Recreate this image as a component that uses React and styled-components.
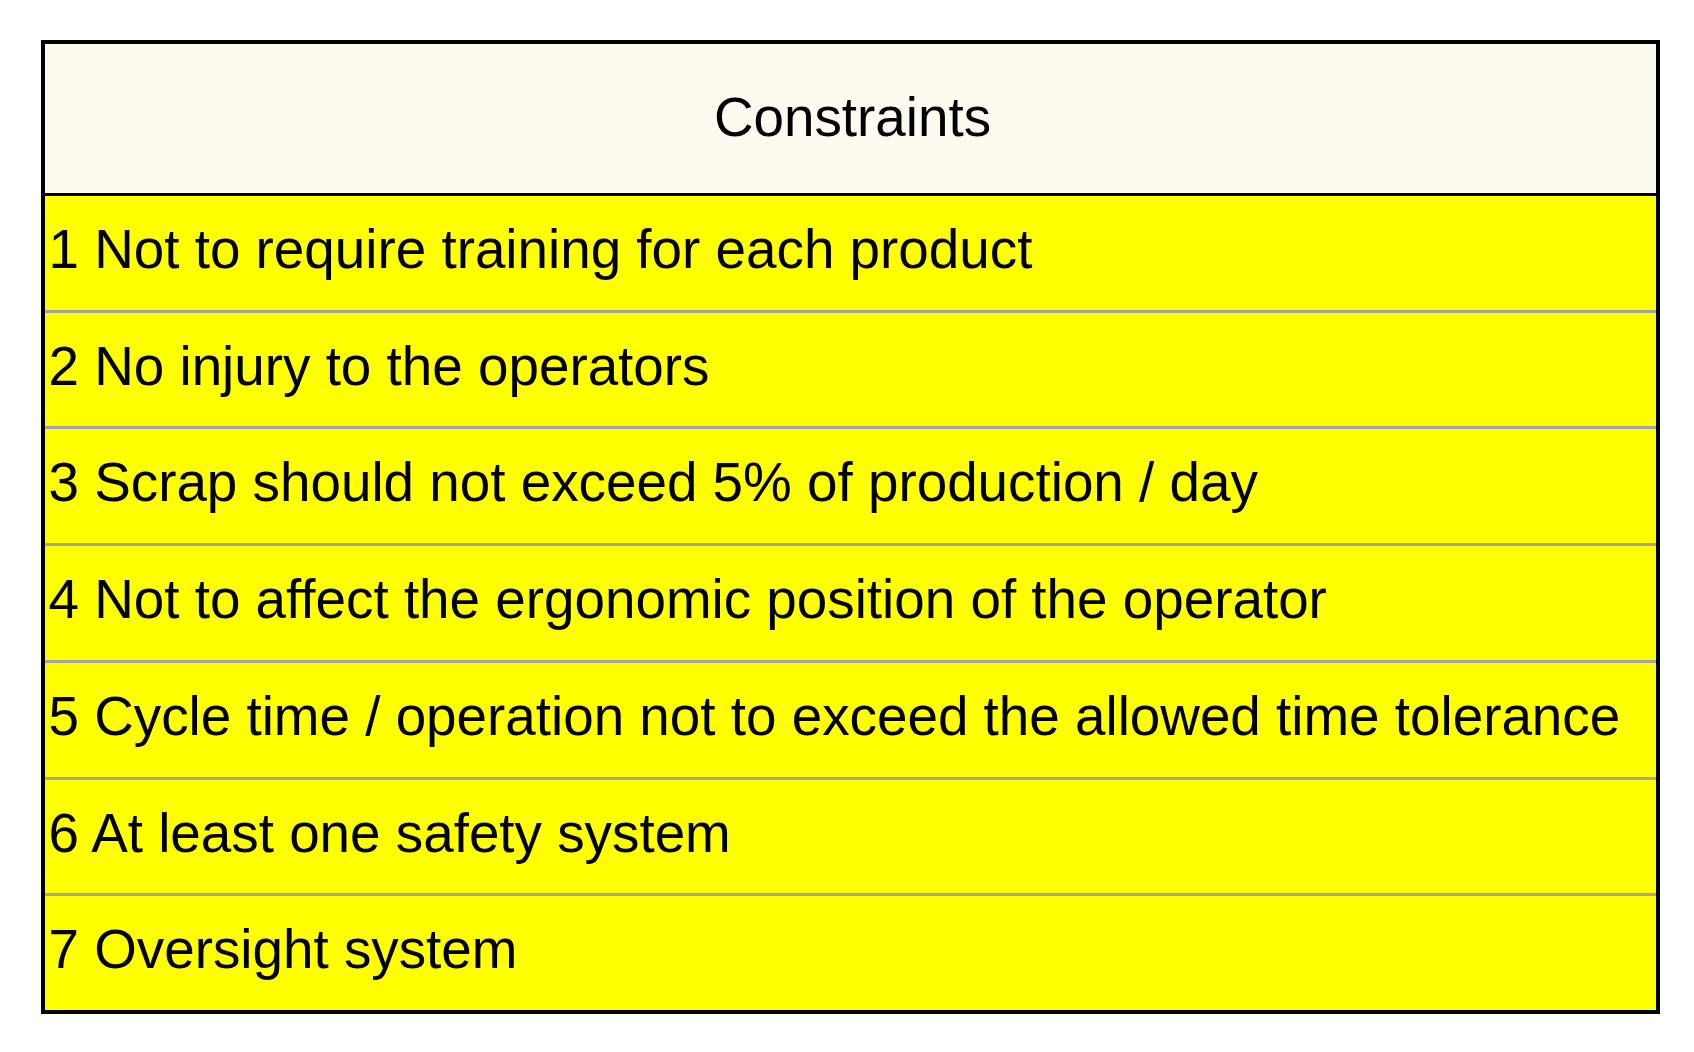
import React from "react";
import styled, { createGlobalStyle } from "styled-components";

const GlobalStyle = createGlobalStyle`
  html, body {
    margin: 0;
    padding: 0;
    background: #ffffff;
  }
  body {
    font-family: "Liberation Sans", Arial, sans-serif;
  }
`;

const Page = styled.div`
  padding: 40px 0 0 41px;
`;

const Table = styled.div`
  box-sizing: border-box;
  width: 1619px;
  border: 4px solid #000000;
  display: flex;
  flex-direction: column;
`;

const Header = styled.div`
  box-sizing: content-box;
  height: 149px;
  background: #fffaf0;
  border-bottom: 3px solid #000000;
  display: flex;
  justify-content: center;
  align-items: flex-start;
  padding: 0 0 0 4px;
`;

const HeaderText = styled.span`
  margin-top: 43px;
  font-size: 54.8px;
  line-height: 61px;
  color: #000000;
`;

const Body = styled.div`
  height: 814px;
  display: flex;
  flex-direction: column;
  background: #ffff00;
`;

const Row = styled.div`
  box-sizing: border-box;
  flex: 1 1 0;
  border-top: ${(p) => (p.$first ? "none" : "3px solid #a3a3a3")};
  background: #ffff00;
  padding: 23px 0 0 3.5px;
  font-size: 54.8px;
  line-height: 61px;
  color: #000000;
  white-space: nowrap;
`;

const items = [
  "1 Not to require training for each product",
  "2 No injury to the operators",
  "3 Scrap should not exceed 5% of production / day",
  "4 Not to affect the ergonomic position of the operator",
  "5 Cycle time / operation not to exceed the allowed time tolerance",
  "6 At least one safety system",
  "7 Oversight system",
];

export default function App() {
  return (
    <>
      <GlobalStyle />
      <Page>
        <Table>
          <Header>
            <HeaderText>Constraints</HeaderText>
          </Header>
          <Body>
            {items.map((t, i) => (
              <Row key={i} $first={i === 0}>
                {t}
              </Row>
            ))}
          </Body>
        </Table>
      </Page>
    </>
  );
}
